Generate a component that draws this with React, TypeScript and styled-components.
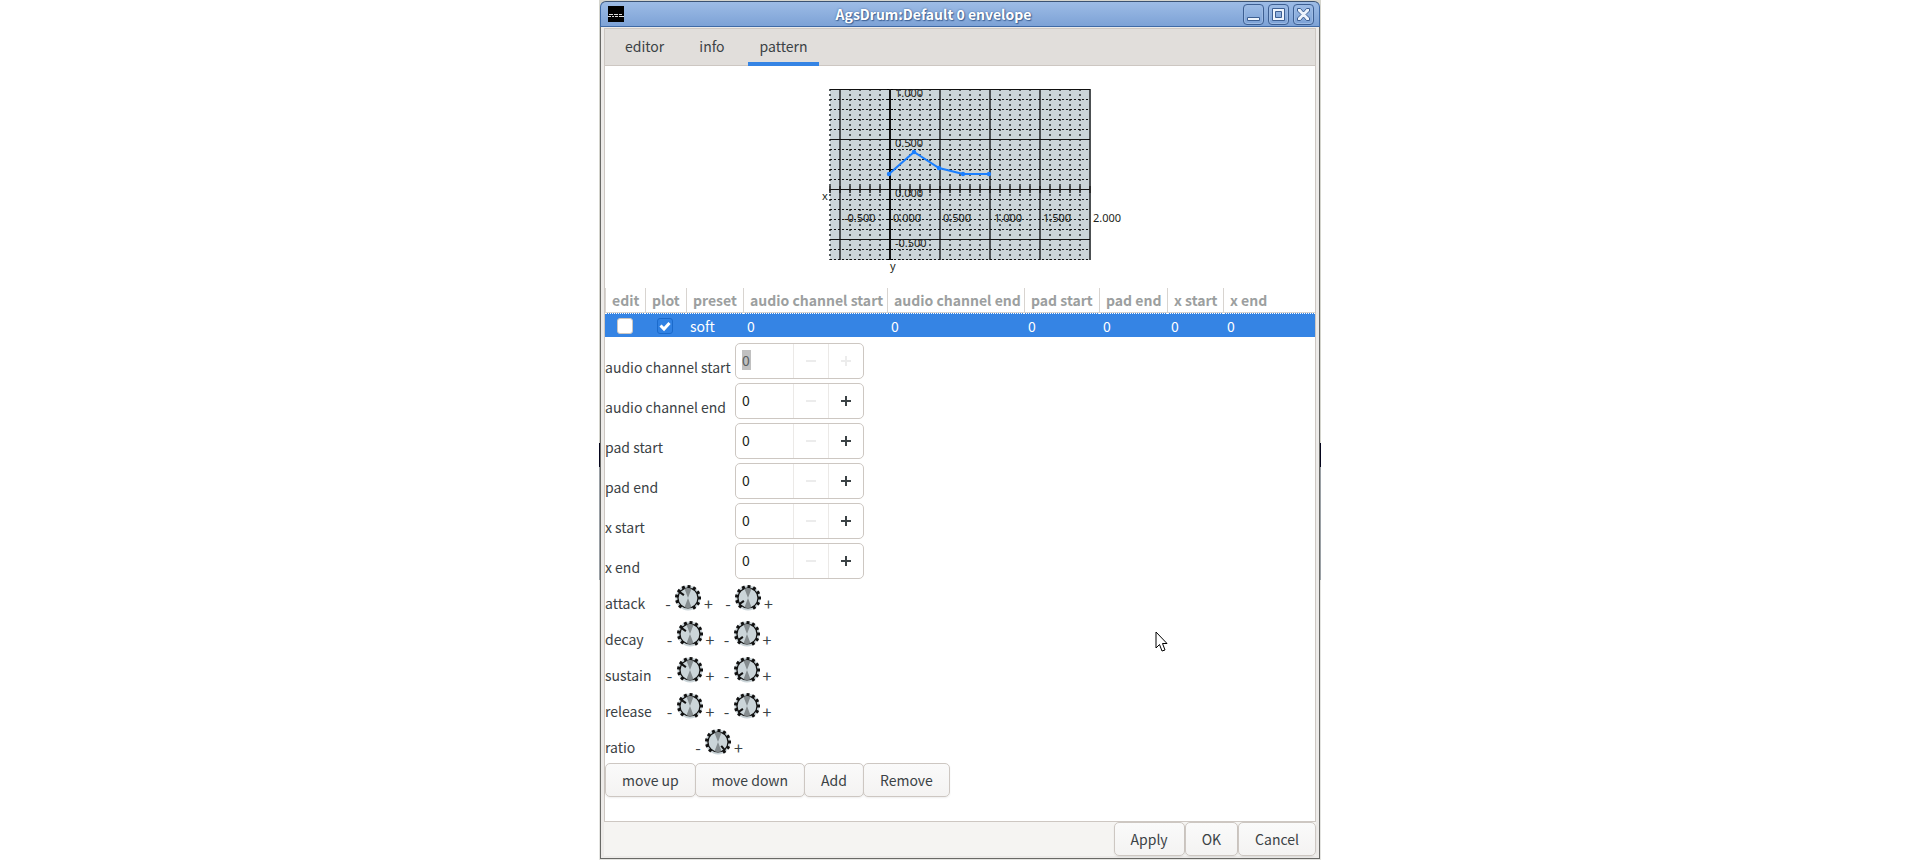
import React from 'react';
import styled, { createGlobalStyle } from 'styled-components';

const Global = createGlobalStyle`
  * { box-sizing: border-box; }
  body {
    margin: 0;
    background: #fff;
    color: #3b4245;
    font: 14px/24px "Noto Sans CJK SC", "Noto Sans", sans-serif;
  }
  button, input { font: inherit; color: inherit; }
`;

const Desktop = styled.div`
  display: flex;
  justify-content: center;
  min-height: 100vh;
  padding: 1px 0 2px;
`;

/* The strips left and right of the frame show the windows that lie behind it. */
const Window = styled.div`
  position: relative;
  isolation: isolate;
  display: flex;
  flex-direction: column;
  width: 720px;
  max-width: 100%;
  &::before {
    content: "";
    position: absolute;
    z-index: -1;
    inset: -1px -1px -1px;
    background: linear-gradient(
      #d4d4cd 443px, #05051c 443px 467px, #9aa0a5 467px 580px, #e4e4e1 580px
    );
  }
`;

const TitleBar = styled.header`
  display: grid;
  grid-template-columns: 16px 1fr 71px;
  align-items: center;
  height: 26px;
  padding: 0 5px 0 7px;
  background: linear-gradient(#9dbce6, #7da2d6);
  border: 1px solid #3f6aa6;
  border-top-color: #3a5273;
  border-radius: 6px 6px 0 0;
`;

const Title = styled.h1`
  margin: 0;
  text-align: center;
  font-size: 14px;
  line-height: 22px;
  font-weight: 700;
  color: #fff;
  text-shadow: 0 0 2px #3f6396, 1px 1px 1px #3f6396;
`;

const WindowButtons = styled.div`
  display: flex;
  justify-content: flex-end;
  gap: 4px;
`;

const WindowButton = styled.button`
  display: flex;
  width: 21px;
  height: 21px;
  padding: 0;
  border: 1px solid #3d5f92;
  border-radius: 4px;
  background: linear-gradient(#9dbce6, #7da2d6);
  box-shadow: inset 0 0 0 1px #9dbbe4;
`;

const Body = styled.div`
  display: flex;
  flex: 1;
  flex-direction: column;
  padding: 1px 3px 2px;
  background: #edebe9;
  border: 1px solid #696966;
  border-top: 0;
`;

const Tabs = styled.nav`
  display: flex;
  gap: 11px;
  height: 38px;
  padding: 0 8px;
  background: #e1dedb;
  border: 1px solid #cdc7c2;
`;

const Tab = styled.button<{ $active?: boolean }>`
  padding: 0 12px 4px;
  margin-bottom: -1px;
  border: 0;
  background: none;
  box-shadow: ${p => (p.$active ? 'inset 0 -4px #3584e4' : 'none')};
`;

const Page = styled.main`
  display: flex;
  flex: 1;
  flex-direction: column;
  background: #fff;
  border: 1px solid #cdc7c2;
  border-top: 0;
`;

const PlotArea = styled.div`
  display: flex;
  justify-content: center;
  padding: 14px 0 8px;
`;

const PlotDrawing = styled.svg`
  overflow: visible;
`;

const PresetTable = styled.table`
  width: 100%;
  border-collapse: separate;
  border-spacing: 0;
  table-layout: fixed;
`;

const Head = styled.th<{ $width?: number }>`
  width: ${p => (p.$width ? `${p.$width}px` : 'auto')};
  height: 25px;
  padding: 0 0 0 6px;
  border-left: 1px solid #d8d4d0;
  border-bottom: 1px solid #d8d4d0;
  text-align: left;
  font-weight: 700;
  white-space: nowrap;
  color: #9c9fa0;
`;

const Cell = styled.td<{ $check?: boolean }>`
  height: 24px;
  padding: 0 0 0 ${p => (p.$check ? '12px' : '4px')};
  background: #3584e4;
  border-top: 1px dotted #fff;
  color: #fff;
  line-height: 22px;
`;

const Check = styled.input`
  display: block;
  appearance: none;
  width: 16px;
  height: 16px;
  margin: 0;
  border: 1px solid #cdc7c2;
  border-radius: 3px;
  background: #fff;
  &:checked {
    border-color: #1b6acb;
    background: #3081e3 url("data:image/svg+xml,%3Csvg xmlns='http://www.w3.org/2000/svg' viewBox='0 0 14 14'%3E%3Cpath d='M2.5 6.500l3.500 3.500 5.500-6' fill='none' stroke='white' stroke-width='3'/%3E%3C/svg%3E");
  }
`;

const Fields = styled.div`
  display: grid;
  gap: 6px;
  padding-top: 6px;
`;

const FieldRow = styled.div`
  display: grid;
  grid-template-columns: 130px 129px;
  height: 34px;
`;

const FieldLabel = styled.label`
  padding-top: 12px;
  white-space: nowrap;
`;

const Spin = styled.div`
  display: grid;
  grid-template-columns: 1fr 35px 35px;
  border: 1px solid #cdc7c2;
  border-radius: 5px;
  overflow: hidden;
`;

const SpinInput = styled.input`
  width: 100%;
  height: 32px;
  padding: 0 6px;
  border: 0;
  outline: 0;
  background: none;
  color: #1c1f20;
`;

const SelectedInput = styled(SpinInput)`
  width: 9px;
  height: 20px;
  margin: 6px 0 0 6px;
  padding: 0;
  background: #c0c0c0;
  color: #5a5f60;
`;

const SpinButton = styled.button`
  display: flex;
  align-items: center;
  justify-content: center;
  padding: 0;
  border: 0;
  border-left: 1px solid #ebe9e7;
  background: none;
  color: #3b4245;
  &:disabled { color: #ececec; }
`;

const Knobs = styled.div`
  display: grid;
  padding: 4px 0 2px;
`;

const KnobRow = styled.div`
  display: grid;
  grid-template-columns: 52px 122px;
  height: 36px;
`;

const KnobLabel = styled.span`
  padding-top: 10px;
`;

const KnobPair = styled.div<{ $wide?: boolean }>`
  display: flex;
  justify-content: center;
  gap: ${p => (p.$wide ? 12 : 9)}px;
`;

const Dial = styled.div`
  display: grid;
  grid-template-columns: 8px 28px 8px;
  gap: 2px;
  padding-top: 3px;
`;

const Sign = styled.span`
  padding-top: 7px;
  text-align: center;
  font-size: 16px;
`;

const Actions = styled.div`
  display: flex;
`;

const ActionButton = styled.button`
  height: 34px;
  padding: 0 16px;
  border: 1px solid #cdc7c2;
  border-radius: 5px;
  background: linear-gradient(#fafafa, #f4f3f2);
  box-shadow: 0 1px 2px rgba(0, 0, 0, 0.07);
  white-space: nowrap;
  ${Actions} & + & { margin-left: -1px; }
`;

const Footer = styled.footer`
  display: flex;
  justify-content: flex-end;
  background: #f5f4f2;
`;

const Pointer = styled.svg`
  position: absolute;
  left: 555px;
  top: 630px;
`;

const range = (n: number) => Array.from({ length: n }, (_, i) => i);

function Plot() {
  const points = [[79, 94], [104, 72], [129, 88], [153, 94], [179, 94]];
  return (
    <PlotDrawing width="300" height="200" role="img" aria-label="envelope plot" fontFamily="Noto Sans, sans-serif" fontSize="11" fill="#1c1f20">
      <rect x="20" y="9" width="261" height="171" fill="#cbd5d9" />
      {range(27).map(i => {
        const x = 20 + i * 10;
        const solid = i % 5 === 1;
        return <path key={i} d={`M${x} 9V180`} stroke={solid ? '#2b2e30' : '#54595b'} strokeWidth={solid ? 1.6 : 2} strokeDasharray={solid ? undefined : '2 3'} />;
      })}
      {range(18).map(i => {
        const y = 9.5 + i * 10;
        return <path key={i} d={`M20 ${y}H280`} stroke="#111" strokeDasharray={i % 5 === 0 ? undefined : '2 2'} />;
      })}
      {range(27).map(i => <path key={i} d={`M${20 + i * 10} 106v7`} stroke="#222" strokeWidth="1.600" />)}
      {range(18).map(i => <path key={i} d={`M77 ${9.5 + i * 10}h6`} stroke="#000" />)}
      <path d="M80 9V180" stroke="#111" strokeWidth="2" />
      <g>
        <text x="85" y="17">1.000</text>
        <text x="85" y="67">0.500</text>
        <text x="85" y="117">0.000</text>
        <text x="85" y="167">-0.500</text>
        <text x="34" y="142">-0.500</text>
        <text x="83" y="142">0.000</text>
        <text x="133" y="142">0.500</text>
        <text x="184" y="142">1.000</text>
        <text x="233" y="142">1.500</text>
        <text x="283" y="142">2.000</text>
        <text x="12" y="120">x</text>
        <text x="80" y="190">y</text>
      </g>
      <polyline points={points.map(p => p.join(',')).join(' ')} fill="none" stroke="#1a7fff" strokeWidth="2" />
      {points.map(([x, y]) => <circle key={x} cx={x} cy={y} r="2.2" fill="#1a7fff" />)}
    </PlotDrawing>
  );
}

function Knob({ angle }: { angle: number }) {
  return (
    <svg width="28" height="28" viewBox="-14 -14 28 28" aria-hidden="true">
      <circle r="12.500" fill="#cbd5d9" />
      {range(11).map(i => (
        <rect key={i} x="-1.500" y="-13" width="3" height="3.500" fill="#111" transform={`rotate(${-137 + i * 28.4})`} />
      ))}
      <circle r="10" fill="#cbd5d9" stroke="#111" strokeWidth="1.200" />
      <path d="M0 0L-3.500 -9.300A10 10 0 0 1 3.500 -9.300Z M0 0L-3.500 9.300A10 10 0 0 0 3.500 9.300Z" fill="#858c8f" />
      <path d="M0 -5V-11" stroke="#111" strokeWidth="2" transform={`rotate(${angle})`} />
    </svg>
  );
}

function KnobControl({ angle }: { angle: number }) {
  return (
    <Dial>
      <Sign>-</Sign>
      <Knob angle={angle} />
      <Sign>+</Sign>
    </Dial>
  );
}

function SpinField({ label, disabled }: { label: string; disabled?: boolean }) {
  const id = label.replace(/ /g, '-');
  const Input = disabled ? SelectedInput : SpinInput;
  return (
    <FieldRow>
      <FieldLabel htmlFor={id}>{label}</FieldLabel>
      <Spin>
        <Input id={id} defaultValue="0" />
        <SpinButton disabled aria-label={`decrease ${label}`}>
          <svg width="10" height="10"><path d="M0 5H10" stroke="currentColor" strokeWidth="2" /></svg>
        </SpinButton>
        <SpinButton disabled={disabled} aria-label={`increase ${label}`}>
          <svg width="10" height="10"><path d="M0 5H10M5 0V10" stroke="currentColor" strokeWidth="2" /></svg>
        </SpinButton>
      </Spin>
    </FieldRow>
  );
}

const columns: [string, number?][] = [
  ['edit', 40], ['plot', 41], ['preset', 57], ['audio channel start', 144],
  ['audio channel end', 137], ['pad start', 75], ['pad end', 68], ['x start', 56], ['x end'],
];
const fields = ['audio channel start', 'audio channel end', 'pad start', 'pad end', 'x start', 'x end'];
const knobs = [
  { label: 'attack', angles: [-55, -125] },
  { label: 'decay', angles: [-55, -125] },
  { label: 'sustain', angles: [-55, -125] },
  { label: 'release', angles: [-55, -125] },
  { label: 'ratio', angles: [140] },
];

const glyphs = [
  { name: 'Minimize', draw: <path d="M3.500 12.500h12v3h-12z" /> },
  { name: 'Maximize', draw: <path fillRule="evenodd" d="M3.500 3.500h12v12h-12zM6.500 6.500v6h6v-6z" /> },
  { name: 'Close', draw: <path d="M3.500 3.500h3l3 3.500l3-3.500h3v2.500l-3.500 3.500l3.500 3.500v2.500h-3l-3-3.500l-3 3.500h-3v-2.500l3.500-3.500l-3.500-3.500z" /> },
];

export default function App() {
  return (
    <Desktop>
      <Global />
      <Window>
        <TitleBar>
          <svg width="16" height="16" aria-hidden="true">
            <rect width="16" height="16" fill="#000" />
            <path d="M1 8.500h4M0 10.500h3M4 10.500h2M6 8.500h4M7 10.500h3M11 8.500h3M11 10.500h5" stroke="#ddd" strokeWidth="1" />
          </svg>
          <Title>AgsDrum:Default 0 envelope</Title>
          <WindowButtons>
            {glyphs.map(g => (
              <WindowButton key={g.name} aria-label={g.name}>
                <svg width="19" height="19" fill="#eef4fc" stroke="#3d5f92">{g.draw}</svg>
              </WindowButton>
            ))}
          </WindowButtons>
        </TitleBar>
        <Body>
          <Tabs>
            <Tab>editor</Tab>
            <Tab>info</Tab>
            <Tab $active>pattern</Tab>
          </Tabs>
          <Page>
            <PlotArea><Plot /></PlotArea>
            <PresetTable>
              <thead>
                <tr>{columns.map(([name, width]) => <Head key={name} $width={width}>{name}</Head>)}</tr>
              </thead>
              <tbody>
                <tr>
                  <Cell $check><Check type="checkbox" aria-label="edit" /></Cell>
                  <Cell $check><Check type="checkbox" aria-label="plot" defaultChecked /></Cell>
                  <Cell>soft</Cell>
                  {range(6).map(i => <Cell key={i}>0</Cell>)}
                </tr>
              </tbody>
            </PresetTable>
            <Fields>
              {fields.map((label, i) => <SpinField key={label} label={label} disabled={i === 0} />)}
            </Fields>
            <Knobs>
              {knobs.map(k => (
                <KnobRow key={k.label}>
                  <KnobLabel>{k.label}</KnobLabel>
                  <KnobPair $wide={k.label === 'attack'}>
                    {k.angles.map(a => <KnobControl key={a} angle={a} />)}
                  </KnobPair>
                </KnobRow>
              ))}
            </Knobs>
            <Actions>
              {['move up', 'move down', 'Add', 'Remove'].map(t => <ActionButton key={t}>{t}</ActionButton>)}
            </Actions>
          </Page>
          <Footer>
            {['Apply', 'OK', 'Cancel'].map(t => <ActionButton key={t}>{t}</ActionButton>)}
          </Footer>
        </Body>
        <Pointer width="14" height="22" aria-hidden="true">
          <path d="M1 1V17L4.500 13.500L7 20L10 19L7.500 12.500H12Z" fill="#fff" stroke="#000" />
        </Pointer>
      </Window>
    </Desktop>
  );
}
